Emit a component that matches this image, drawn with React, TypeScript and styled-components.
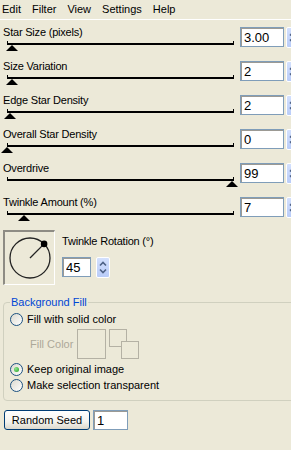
import React from "react";
import styled, { createGlobalStyle } from "styled-components";

const Global = createGlobalStyle`
  html, body { margin: 0; padding: 0; background: #ece9d8; overflow: hidden; }
  body { font-family: "Liberation Sans", Arial, sans-serif; font-size: 11px; color: #000; }
`;

const Page = styled.div`
  width: 291px;
  height: 450px;
  overflow: hidden;
  background: #ece9d8;
`;

const MenuBar = styled.div`
  display: flex;
  gap: 11px;
  height: 19px;
  padding-left: 2px;
  border-bottom: 1px solid #fff;
`;

const MenuItem = styled.span`
  line-height: 18px;
`;

const Body = styled.div`
  width: 320px;
  padding: 4px 0 0 3px;
`;

const Row = styled.div`
  display: flex;
  height: 34px;
`;

const Left = styled.div`
  width: 237px;
  flex-shrink: 0;
`;

const Label = styled.div`
  height: 13px;
  line-height: 13px;
  margin-top: 2px;
  white-space: nowrap;
  letter-spacing: -0.2px;
`;

const Track = styled.div`
  position: relative;
  margin: 2px 0 0 4px;
  width: 225px;
  height: 2px;
  border: 1px solid #000;
  border-top: none;
  border-bottom-width: 2px;
`;

const Thumb = styled.div`
  position: absolute;
  top: 4px;
  width: 0;
  height: 0;
  border-left: 6px solid transparent;
  border-right: 6px solid transparent;
  border-bottom: 6px solid #000;
`;

const NumInput = styled.input<{ $w: number }>`
  box-sizing: border-box;
  flex-shrink: 0;
  width: ${(p) => p.$w}px;
  height: 20px;
  margin: 0;
  border: 1px solid #7f9db9;
  background: #fff;
  box-shadow: inset 1px 1px 0 #9c9a94;
  font-family: "Liberation Sans", Arial, sans-serif;
  font-size: 13px;
  line-height: 18px;
  padding: 0 0 0 3px;
  color: #000;
  outline: none;
`;

const RowInput = styled.div`
  display: flex;
  flex-shrink: 0;
  margin-top: 3px;
  height: 20px;
`;

const SpinBox = styled.div<{ $ml: number }>`
  box-sizing: border-box;
  flex-shrink: 0;
  width: 14px;
  height: 21px;
  margin-left: ${(p) => p.$ml}px;
  border: 1px solid #fff;
  border-radius: 2px;
  background: linear-gradient(#d3e0fd, #b9ccf8);
  display: flex;
  align-items: center;
  justify-content: center;
`;

const RotSection = styled.div`
  display: flex;
  margin-top: 2px;
`;

const DialBox = styled.div`
  box-sizing: border-box;
  flex-shrink: 0;
  width: 52px;
  height: 55px;
  border-top: 2px solid #8e8c84;
  border-left: 2px solid #8e8c84;
  border-right: 1px solid #fff;
  border-bottom: 1px solid #fff;
  display: flex;
  align-items: center;
  justify-content: center;
`;

const RotRight = styled.div`
  margin-left: 7px;
  display: flex;
  flex-direction: column;
`;

const RotLabel = styled.div`
  margin-top: 5px;
  line-height: 13px;
  letter-spacing: -0.2px;
`;

const RotInputRow = styled.div`
  display: flex;
  margin-top: 9px;
`;

const Group = styled.fieldset`
  box-sizing: border-box;
  width: 300px;
  margin: 11px 0 0 0;
  padding: 0 0 7px 6px;
  border: 1px solid #d0d0bf;
  border-radius: 4px;
`;

const Legend = styled.legend`
  padding: 0 1px;
  color: #0046d5;
  line-height: 13px;
  font-size: 11px;
`;

const RadioRow = styled.div<{ $mt?: number }>`
  display: flex;
  align-items: center;
  gap: 4px;
  height: 16px;
  margin-top: ${(p) => p.$mt ?? 0}px;
  white-space: nowrap;
  font-size: 11px;
`;

const RadioCircle = styled.span<{ $checked?: boolean }>`
  box-sizing: border-box;
  flex-shrink: 0;
  width: 13px;
  height: 13px;
  border-radius: 50%;
  border: 1px solid #1c5180;
  background: linear-gradient(135deg, #dcd9ce, #ffffff);
  display: flex;
  align-items: center;
  justify-content: center;
  &::after {
    content: "";
    display: ${(p) => (p.$checked ? "block" : "none")};
    width: 5px;
    height: 5px;
    border-radius: 50%;
    background: radial-gradient(circle at 35% 35%, #8ee58e, #21a121);
  }
`;

const FillRow = styled.div`
  display: flex;
  align-items: flex-start;
  margin: 2px 0 3px 20px;
  height: 29px;
`;

const FillLabel = styled.span`
  color: #aca899;
  margin-top: 9px;
  font-size: 11px;
  width: 47px;
`;

const ColorBox = styled.div`
  box-sizing: border-box;
  width: 29px;
  height: 30px;
  border: 1px solid #b4b1a4;
`;

const SwapBox = styled.div`
  position: relative;
  width: 31px;
  height: 30px;
  margin-left: 3px;
`;

const SmallSquare = styled.div<{ $x: number; $y: number }>`
  position: absolute;
  left: ${(p) => p.$x}px;
  top: ${(p) => p.$y}px;
  box-sizing: border-box;
  width: 18px;
  height: 18px;
  border: 1px solid #b4b1a4;
  background: #ece9d8;
`;

const SeedRow = styled.div`
  display: flex;
  gap: 3px;
  margin: 9px 0 0 1px;
`;

const Button = styled.button`
  box-sizing: border-box;
  width: 86px;
  height: 20px;
  margin: 0;
  padding: 0;
  border: 1px solid #003c74;
  border-radius: 3px;
  background: linear-gradient(#ffffff 0%, #f4f3ee 60%, #dcd8cc 100%);
  font-family: "Liberation Sans", Arial, sans-serif;
  font-size: 11px;
  color: #000;
`;

const SpinGlyph = () => (
  <svg width="8" height="13" viewBox="0 0 8 13">
    <path d="M1 4.5 L4 1.5 L7 4.5" fill="none" stroke="#4d6185" strokeWidth="1.6" />
    <path d="M1 8.5 L4 11.5 L7 8.5" fill="none" stroke="#4d6185" strokeWidth="1.6" />
  </svg>
);

type SliderProps = { label: string; value: string; pos: number };

const SliderRow = ({ label, value, pos }: SliderProps) => (
  <Row>
    <Left>
      <Label>{label}</Label>
      <Track>
        <Thumb style={{ left: pos * 226 - 7 }} />
      </Track>
    </Left>
    <RowInput>
      <NumInput $w={44} defaultValue={value} readOnly />
      <SpinBox $ml={2}>
        <SpinGlyph />
      </SpinBox>
    </RowInput>
  </Row>
);

const Dial = () => (
  <svg width="48" height="50" viewBox="0 0 48 50">
    <circle cx="24" cy="25" r="20" fill="none" stroke="#222" strokeWidth="1.3" />
    <line x1="24" y1="25" x2="38.1" y2="10.9" stroke="#222" strokeWidth="1.3" />
    <circle cx="38.1" cy="10.9" r="3.3" fill="#000" />
  </svg>
);

const sliders: SliderProps[] = [
  { label: "Star Size (pixels)", value: "3.00", pos: 0.022 },
  { label: "Size Variation", value: "2", pos: 0.022 },
  { label: "Edge Star Density", value: "2", pos: 0.012 },
  { label: "Overall Star Density", value: "0", pos: 0.002 },
  { label: "Overdrive", value: "99", pos: 0.996 },
  { label: "Twinkle Amount (%)", value: "7", pos: 0.075 },
];

export default function App() {
  return (
    <Page>
      <Global />
      <MenuBar>
        {["Edit", "Filter", "View", "Settings", "Help"].map((m) => (
          <MenuItem key={m}>{m}</MenuItem>
        ))}
      </MenuBar>
      <Body>
        {sliders.map((s) => (
          <SliderRow key={s.label} {...s} />
        ))}
        <RotSection>
          <DialBox>
            <Dial />
          </DialBox>
          <RotRight>
            <RotLabel>Twinkle Rotation (°)</RotLabel>
            <RotInputRow>
              <NumInput $w={29} defaultValue="45" readOnly />
              <SpinBox $ml={5}>
                <SpinGlyph />
              </SpinBox>
            </RotInputRow>
          </RotRight>
        </RotSection>
        <Group>
          <Legend>Background Fill</Legend>
          <RadioRow $mt={2}>
            <RadioCircle />
            <span>Fill with solid color</span>
          </RadioRow>
          <FillRow>
            <FillLabel>Fill Color</FillLabel>
            <ColorBox />
            <SwapBox>
              <SmallSquare $x={0} $y={0} />
              <SmallSquare $x={12} $y={12} />
            </SwapBox>
          </FillRow>
          <RadioRow>
            <RadioCircle $checked />
            <span>Keep original image</span>
          </RadioRow>
          <RadioRow>
            <RadioCircle />
            <span>Make selection transparent</span>
          </RadioRow>
        </Group>
        <SeedRow>
          <Button>Random Seed</Button>
          <NumInput $w={35} defaultValue="1" readOnly />
        </SeedRow>
      </Body>
    </Page>
  );
}
